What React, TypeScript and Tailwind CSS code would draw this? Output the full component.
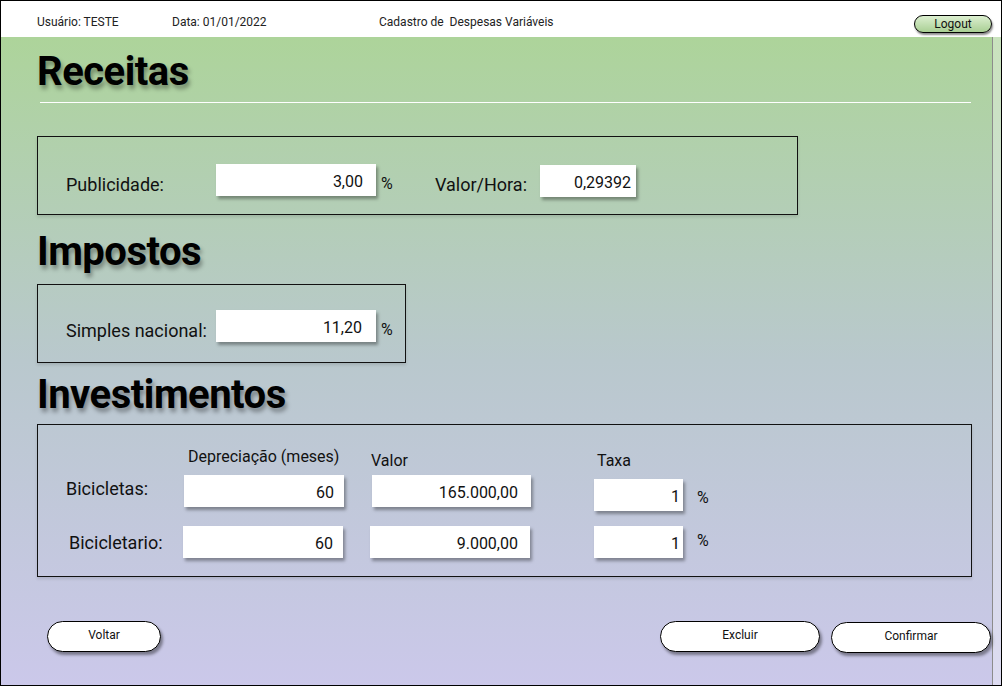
import React from 'react';

const font = "font-['Roboto','Liberation_Sans',sans-serif]";

const Field: React.FC<{ value: string; className?: string }> = ({ value, className = '' }) => (
    <div className={`h-[32px] bg-white flex items-center justify-end pt-[3px] text-[16px] text-[#111] shadow-[2px_3px_3px_rgba(0,0,0,0.35)] ${className}`}>
        {value}
    </div>
);

const Heading: React.FC<{ children: React.ReactNode; className?: string }> = ({ children, className = '' }) => (
    <h2 className={`text-[40px] leading-[40px] font-bold text-black tracking-[-0.5px] [text-shadow:2px_4px_4px_rgba(0,0,0,0.35)] ${className}`}>
        {children}
    </h2>
);

const Pill: React.FC<{ label: string; className?: string }> = ({ label, className = '' }) => (
    <button className={`h-[31px] rounded-full border border-black bg-white text-[12px] text-[#111] pb-[3px] shadow-[2px_3px_3px_rgba(0,0,0,0.4)] ${className}`}>
        {label}
    </button>
);

export default function App() {
    return (
        <div className={`w-[1002px] h-[686px] border border-black flex flex-col overflow-hidden ${font}`}>
            {/* top bar */}
            <header className="h-[36px] bg-white flex items-start text-[12px] leading-[16px] text-[#222] shrink-0">
                <span className="ml-[36px] mt-[13px] w-[135px]">Usuário: TESTE</span>
                <span className="mt-[13px] w-[207px]">Data: 01/01/2022</span>
                <span className="mt-[13px] whitespace-pre">Cadastro de  Despesas Variáveis</span>
                <button className="ml-auto mr-[9px] mt-[14px] w-[78px] h-[18px] rounded-full border-[1.5px] border-black bg-gradient-to-b from-[#dcefd0] to-[#a9cf94] text-[12px] leading-[14px] text-[#111] shadow-[1px_2px_2px_rgba(0,0,0,0.45)]">
                    Logout
                </button>
            </header>

            <div className="flex flex-1 bg-gradient-to-b from-[#add49a] via-[#b9c8cd] to-[#cbc8ea]">
                <main className="w-[992px] border-r border-[#8c8c8c] flex flex-col pl-[36px]">
                    <Heading className="mt-[15px]">Receitas</Heading>
                    <div className="mt-[10px] ml-[3px] w-[931px] h-px bg-white" />

                    <section className="mt-[33px] w-[761px] h-[79px] border border-[#111] flex items-start text-[18px] leading-[22px] text-[#111] shadow-[0_2px_3px_rgba(0,0,0,0.12)]">
                        <span className="ml-[28px] mt-[37px] w-[150px]">Publicidade:</span>
                        <Field value="3,00" className="mt-[27px] w-[160px] pr-[13px]" />
                        <span className="mt-[37px] ml-[5px] w-[54px] text-[16px] leading-[20px]">%</span>
                        <span className="mt-[37px] w-[105px]">Valor/Hora:</span>
                        <Field value="0,29392" className="mt-[28px] w-[96px] pr-[5px]" />
                    </section>

                    <Heading className="mt-[17px]">Impostos</Heading>

                    <section className="mt-[12px] w-[369px] h-[79px] border border-[#111] flex items-start text-[18px] leading-[22px] text-[#111] shadow-[0_2px_3px_rgba(0,0,0,0.12)]">
                        <span className="ml-[28px] mt-[35px] w-[150px]">Simples nacional:</span>
                        <Field value="11,20" className="mt-[25px] w-[160px] pr-[14px]" />
                        <span className="mt-[35px] ml-[5px] text-[16px] leading-[20px]">%</span>
                    </section>

                    <Heading className="mt-[12px]">Investimentos</Heading>

                    <section className="mt-[9px] w-[935px] h-[153px] border border-[#111] flex flex-col pt-[20px] pl-[28px] text-[18px] leading-[22px] text-[#111] shadow-[0_2px_3px_rgba(0,0,0,0.12)]">
                        <div className="h-[30px] flex items-start text-[16px] leading-[20px]">
                            <span className="ml-[122px] mt-[2px] w-[183px]">Depreciação (meses)</span>
                            <span className="mt-[6px] w-[226px]">Valor</span>
                            <span className="mt-[6px]">Taxa</span>
                        </div>

                        <div className="h-[32px] flex items-start">
                            <span className="mt-[3px] w-[118px]">Bicicletas:</span>
                            <Field value="60" className="w-[160px] pr-[10px]" />
                            <Field value="165.000,00" className="ml-[28px] w-[159px] pr-[13px]" />
                            <Field value="1" className="ml-[63px] mt-[4px] w-[89px] pr-[3px]" />
                            <span className="ml-[14px] mt-[13px] text-[16px] leading-[20px]">%</span>
                        </div>

                        <div className="mt-[19px] h-[32px] flex items-start">
                            <span className="ml-[3px] mt-[6px] w-[114px]">Bicicletario:</span>
                            <Field value="60" className="w-[160px] pr-[10px]" />
                            <Field value="9.000,00" className="ml-[27px] w-[160px] pr-[12px]" />
                            <Field value="1" className="ml-[64px] w-[89px] pr-[3px]" />
                            <span className="ml-[14px] mt-[5px] text-[16px] leading-[20px]">%</span>
                        </div>
                    </section>

                    <div className="mt-[44px] ml-[10px] w-[944px] flex items-start">
                        <Pill label="Voltar" className="w-[114px]" />
                        <Pill label="Excluir" className="ml-auto w-[160px]" />
                        <Pill label="Confirmar" className="ml-[11px] mt-[1px] w-[160px]" />
                    </div>
                </main>
                <div className="flex-1 bg-white/35" />
            </div>
        </div>
    );
}
